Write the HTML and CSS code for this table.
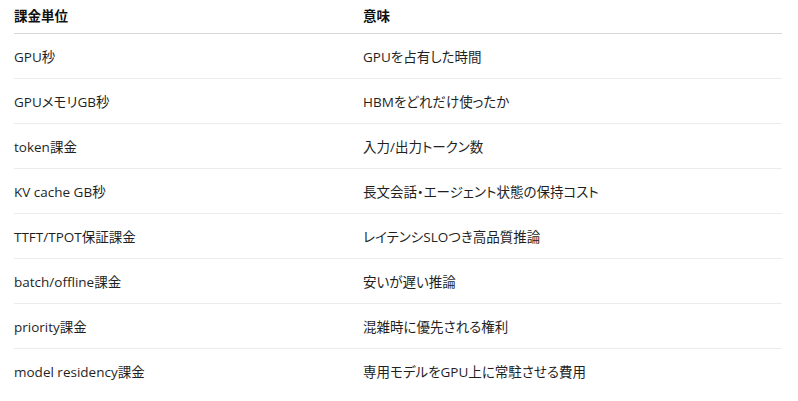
FILE: index.html
```html
<!DOCTYPE html>
<html lang="ja">
<head>
<meta charset="utf-8">
<link rel="stylesheet" href="styles.css">
</head>
<body>
<div class="wrap">
  <table class="units">
    <thead>
      <tr><th>課金単位</th><th>意味</th></tr>
    </thead>
    <tbody>
      <tr><td>GPU秒</td><td>GPUを占有した時間</td></tr>
      <tr><td>GPUメモリGB秒</td><td>HBMをどれだけ使ったか</td></tr>
      <tr><td>token課金</td><td>入力/出力トークン数</td></tr>
      <tr><td>KV cache GB秒</td><td>長文会話・エージェント状態の保持コスト</td></tr>
      <tr><td>TTFT/TPOT保証課金</td><td>レイテンシSLOつき高品質推論</td></tr>
      <tr><td>batch/offline課金</td><td>安いが遅い推論</td></tr>
      <tr><td>priority課金</td><td>混雑時に優先される権利</td></tr>
      <tr><td>model residency課金</td><td>専用モデルをGPU上に常駐させる費用</td></tr>
    </tbody>
  </table>
</div>
</body>
</html>
```

FILE: styles.css
```css
html, body {
  margin: 0;
  padding: 0;
  background: #ffffff;
}
body {
  font-family: "Open Sans", "Noto Sans CJK JP", sans-serif;
  font-size: 13.5px;
  font-feature-settings: "palt";
  color: #1f1f1f;
}
.wrap {
  padding: 0 16px 0 14px;
}
.units {
  width: 100%;
  border-collapse: collapse;
  table-layout: fixed;
}
.units th, .units td {
  text-align: left;
  padding: 0;
  vertical-align: middle;
}
.units th:first-child, .units td:first-child {
  width: 349px;
}
.units thead tr {
  height: 33px;
  border-bottom: 1px solid #d6d6d6;
}
.units th {
  font-weight: 600;
  color: #111;
  padding-bottom: 2px;
}
.units tbody tr {
  height: 45px;
  border-bottom: 1px solid #ececec;
}
.units tbody tr:last-child {
  border-bottom: none;
}
```
